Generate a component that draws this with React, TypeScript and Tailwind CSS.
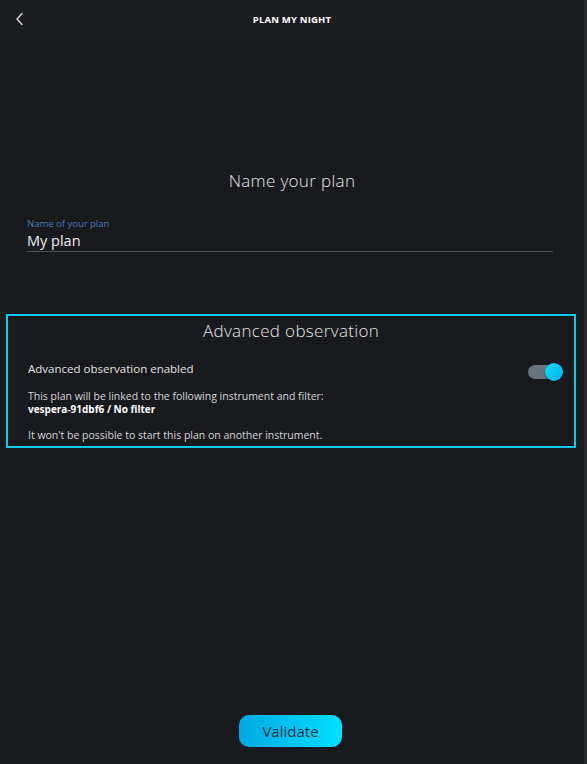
export default function App() {
    return (
        <div className="flex h-[764px] w-[587px] overflow-hidden bg-[#181a1e] font-['Open_Sans',sans-serif] text-[#e6e7e8]">
            <div className="flex flex-1 flex-col">
                <header className="relative flex h-10 items-center justify-center bg-[#1c1d20]">
                    <svg className="absolute left-[15px] top-[12px]" width="10" height="14" viewBox="0 0 10 14" fill="none">
                        <path d="M7 1.5 L2 7 L7 12.5" stroke="#d8d8d8" strokeWidth="1.4" strokeLinecap="round" strokeLinejoin="round" />
                    </svg>
                    <span className="text-[9.5px] font-bold tracking-[0.02em] text-white">PLAN MY NIGHT</span>
                </header>

                <div className="flex flex-col items-center pt-[129px]">
                    <h2 className="text-[17px] font-light leading-6 tracking-[0.02em] text-[#e4e4e4]">Name your plan</h2>
                </div>

                <div className="ml-[27px] mr-[31px] mt-[25px] flex flex-col border-b border-[#4d5055] pb-[1px]">
                    <span className="text-[9.5px] leading-3 text-[#4f7bab]">Name of your plan</span>
                    <span className="mt-[2px] text-[14.5px] leading-[18px] text-[#ececec]">My plan</span>
                </div>

                <section className="ml-[6px] mr-[8px] mt-[62px] flex flex-col border-2 border-[#0fc8ee] px-[20px] pb-[4px]">
                    <h3 className="mt-[3px] text-center text-[17px] font-light leading-6 tracking-[0.02em] text-[#e4e4e4]">Advanced observation</h3>
                    <div className="mt-[17px] flex items-start justify-between">
                        <span className="text-[11.5px] leading-[18px] text-[#e2e2e2]">Advanced observation enabled</span>
                        <div className="relative mr-[-9px] mt-[3px] h-[18px] w-[35px]">
                            <div className="absolute left-0 top-[2px] h-[14px] w-[26px] rounded-full bg-[#6b737c]" />
                            <div className="absolute left-[17px] top-0 h-[18px] w-[18px] rounded-full bg-gradient-to-br from-[#0ad8ff] to-[#00b8ec] shadow-[0_1px_2px_rgba(0,0,0,0.5)]" />
                        </div>
                    </div>
                    <p className="mt-[9px] text-[10.5px] leading-[13px] text-[#d6d6d6]">
                        This plan will be linked to the following instrument and filter:
                    </p>
                    <p className="text-[10px] font-bold leading-[13px] text-white">vespera-91dbf6 / No filter</p>
                    <p className="mt-[13px] text-[10.5px] leading-[13px] text-[#d6d6d6]">
                        It won't be possible to start this plan on another instrument.
                    </p>
                </section>

                <div className="mt-auto flex justify-center pb-[17px]">
                    <button className="ml-[-3px] h-[32px] w-[103px] rounded-[10px] bg-gradient-to-r from-[#00a9e2] to-[#00e0ff] text-[15px] text-[#163448]">
                        Validate
                    </button>
                </div>
            </div>
            <div className="w-[3px] bg-[#2a2c2f]" />
        </div>
    );
}
